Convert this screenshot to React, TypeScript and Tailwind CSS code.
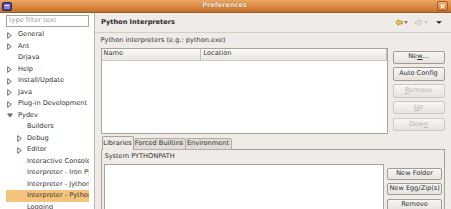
import type { ReactNode } from "react";

/* ------------------------------ data ------------------------------ */

type Node = { label: string; level: 0 | 1; arrow?: "right" | "down"; selected?: boolean };

const tree: Node[] = [
  { label: "General", level: 0, arrow: "right" },
  { label: "Ant", level: 0, arrow: "right" },
  { label: "Drjava", level: 0 },
  { label: "Help", level: 0, arrow: "right" },
  { label: "Install/Update", level: 0, arrow: "right" },
  { label: "Java", level: 0, arrow: "right" },
  { label: "Plug-in Development", level: 0, arrow: "right" },
  { label: "Pydev", level: 0, arrow: "down" },
  { label: "Builders", level: 1 },
  { label: "Debug", level: 1, arrow: "right" },
  { label: "Editor", level: 1, arrow: "right" },
  { label: "Interactive Console", level: 1 },
  { label: "Interpreter - Iron Python", level: 1 },
  { label: "Interpreter - Jython", level: 1 },
  { label: "Interpreter - Python", level: 1, selected: true },
  { label: "Logging", level: 1 },
];

/* ------------------------------ icons ------------------------------ */

function Arrow({ dir }: { dir: "right" | "down" }) {
  if (dir === "down") {
    return (
      <svg width="6" height="5" viewBox="0 0 6 5">
        <polygon points="0.5,0.8 5.5,0.8 3,4.2" fill="#6b6b6b" stroke="#6b6b6b" strokeWidth="0.6" />
      </svg>
    );
  }
  return (
    <svg width="5" height="7" viewBox="0 0 5 7">
      <polygon points="0.7,0.7 4.3,3.5 0.7,6.3" fill="none" stroke="#5a5a5a" strokeWidth="0.9" />
    </svg>
  );
}

function NavArrow({ left, color, stroke }: { left?: boolean; color: string; stroke: string }) {
  return (
    <svg width="8" height="7" viewBox="0 0 8 7" className={left ? "" : "-scale-x-100"}>
      <path d="M0.6 3.5 L3.6 0.6 V2.1 H7.4 V4.9 H3.6 V6.4 Z" fill={color} stroke={stroke} strokeWidth="0.8" />
    </svg>
  );
}

function Caret({ color, w = 3 }: { color: string; w?: number }) {
  return (
    <svg width={w + 1} height="3" viewBox={`0 0 ${w + 1} 3`}>
      <polygon points={`0,0.3 ${w + 1},0.3 ${(w + 1) / 2},2.8`} fill={color} />
    </svg>
  );
}

/* ------------------------------ parts ------------------------------ */

function Button({ children, disabled, className }: { children: ReactNode; disabled?: boolean; className?: string }) {
  return (
    <div
      className={`flex shrink-0 items-center justify-center rounded-[2px] border bg-gradient-to-b from-[#f7f6f4] to-[#e7e3df] ${
        disabled ? "border-[#cdc8c2] text-[#b9b4ae]" : "border-[#a39c95] text-[#2e2e2e]"
      } ${className ?? ""}`}
    >
      {children}
    </div>
  );
}

function TitleBar() {
  return (
    <div className="relative flex h-[13px] shrink-0 items-center border-b border-[#9a5a20] bg-gradient-to-b from-[#eaa765] via-[#db8c44] to-[#c4702a]">
      <svg width="10" height="9" viewBox="0 0 10 9" className="ml-[2px]">
        <rect x="0.5" y="0.5" width="9" height="8" rx="1" fill="#4c3f9a" stroke="#2e2566" />
        <rect x="2" y="2" width="6" height="5" fill="#8a7fd8" />
        <rect x="3" y="3" width="4" height="1" fill="#ffffff" />
      </svg>
      <div className="flex-1 text-center text-[6.6px] font-bold text-[#f8ece0] [text-shadow:0_0_1px_#8a4a10]">
        Preferences
      </div>
      <div className="mr-[3px] flex h-[10px] w-[11px] items-center justify-center rounded-[2px] border border-[#a4581c] bg-gradient-to-b from-[#efb47a] to-[#d07c34]">
        <svg width="5" height="5" viewBox="0 0 5 5">
          <path d="M0.6 0.6 L4.4 4.4 M4.4 0.6 L0.6 4.4" stroke="#ffffff" strokeWidth="1.2" />
        </svg>
      </div>
    </div>
  );
}

function Sidebar() {
  return (
    <div className="flex w-[95px] shrink-0 flex-col border-r border-[#bdb6ae] bg-white pl-[6px] pr-[5px] pt-[2px]">
      <div className="flex h-[11.5px] shrink-0 items-center border border-[#a8a29b] bg-white px-[2px] text-[6.6px] text-[#9a9a9a]">
        type filter text
      </div>
      <div className="mt-[2.9px] min-h-0 overflow-hidden">
        {tree.map((n) => (
          <div
            key={n.label}
            className={`flex h-[11.5px] shrink-0 items-center whitespace-nowrap text-[6.6px] text-[#333333] ${
              n.selected ? "bg-[#f4c47c]" : ""
            }`}
            style={{ paddingLeft: n.level === 0 ? 1 : 11 }}
          >
            <span className="flex w-[11px] shrink-0 items-center">{n.arrow && <Arrow dir={n.arrow} />}</span>
            <span className={n.level === 1 ? "-ml-[1px]" : ""}>{n.label}</span>
          </div>
        ))}
      </div>
    </div>
  );
}

function Content() {
  return (
    <div className="flex min-w-0 flex-1 flex-col overflow-hidden bg-[#efebe7] text-[6.6px] text-[#333333]">
      {/* header */}
      <div className="flex h-[20px] shrink-0 items-center border-b border-[#d4cec7] pl-[6px] pr-[9px]">
        <span className="flex-1 font-bold text-[#2a2a2a]">Python Interpreters</span>
        <div className="flex items-center gap-[1px]">
          <NavArrow left color="#f3cb4a" stroke="#b38a1c" />
          <Caret color="#6a6a6a" />
        </div>
        <div className="ml-[7px] flex items-center gap-[1px]">
          <NavArrow color="#ebe8e4" stroke="#c3beb8" />
          <Caret color="#c3beb8" />
        </div>
        <div className="ml-[8px]">
          <Caret color="#1e1e1e" w={5} />
        </div>
      </div>

      <div className="flex shrink-0 flex-col pl-[5.5px] pr-[6px]">
        <div className="flex h-[15px] shrink-0 items-center">Python interpreters (e.g.: python.exe)</div>

        {/* interpreters table + buttons */}
        <div className="flex shrink-0">
          <div className="flex h-[86px] w-[287px] flex-col border border-[#a9a39c] bg-white">
            <div className="flex h-[11.5px] shrink-0 items-center border-b border-[#cfc9c2] bg-gradient-to-b from-[#fbfaf9] to-[#e8e5e1]">
              <div className="flex h-full w-[99px] items-center border-r border-[#c7c1ba] pl-[2px]">Name</div>
              <div className="flex-1 pl-[3px]">Location</div>
              <div className="h-full w-[1px] bg-[#c7c1ba]" />
            </div>
          </div>
          <div className="ml-[5px] flex w-[52px] flex-col gap-[3.3px] pt-[2.6px]">
            <Button className="h-[13.5px]">
              Ne<span className="underline">w</span>...
            </Button>
            <Button className="h-[13.5px]">Auto Config</Button>
            <Button disabled className="h-[13.5px]">
              <span className="underline">R</span>emove
            </Button>
            <Button disabled className="h-[13.5px]">
              <span className="underline">U</span>p
            </Button>
            <Button disabled className="h-[13.5px]">
              Dow<span className="underline">n</span>
            </Button>
          </div>
        </div>

        {/* tabs */}
        <div className="mt-[2px] flex h-[14px] shrink-0 items-end pl-[1px]">
          <div className="flex h-[14px] w-[32px] items-center justify-center rounded-t-[2px] border border-b-0 border-[#a9a39c] bg-[#efebe7] text-[#2a2a2a]">
            Libraries
          </div>
          <div className="flex h-[12.5px] w-[52px] items-center justify-center rounded-t-[2px] border border-l-0 border-[#b3ada6] bg-[#e0dbd5]">
            Forced Builtins
          </div>
          <div className="flex h-[12.5px] w-[46px] items-center justify-center rounded-t-[2px] border border-l-0 border-[#b3ada6] bg-[#e0dbd5]">
            Environment
          </div>
          <div className="h-[1px] flex-1 bg-[#a9a39c]" />
        </div>
        <div className="flex h-[80px] shrink-0 flex-col border border-t-0 border-[#a9a39c] pl-[2.5px] pr-[2px]">
          <div className="flex h-[14px] shrink-0 items-center pl-[0.5px]">System PYTHONPATH</div>
          <div className="flex shrink-0">
            <div className="h-[60px] w-[281px] border border-[#a9a39c] bg-white" />
            <div className="ml-[3px] flex w-[55px] flex-col gap-[3.3px] pt-[4px]">
              <Button className="h-[12px] text-[#1e1e1e]">New Folder</Button>
              <Button className="h-[12px] text-[#1e1e1e]">New Egg/Zip(s)</Button>
              <Button className="h-[12px] text-[#1e1e1e]">Remove</Button>
            </div>
          </div>
        </div>
      </div>
    </div>
  );
}

export default function App() {
  return (
    <div className="flex h-[209px] w-[451px] flex-col overflow-hidden bg-[#efebe7] font-['DejaVu_Sans',sans-serif]">
      <TitleBar />
      <div className="flex min-h-0 flex-1">
        <Sidebar />
        <Content />
      </div>
    </div>
  );
}
